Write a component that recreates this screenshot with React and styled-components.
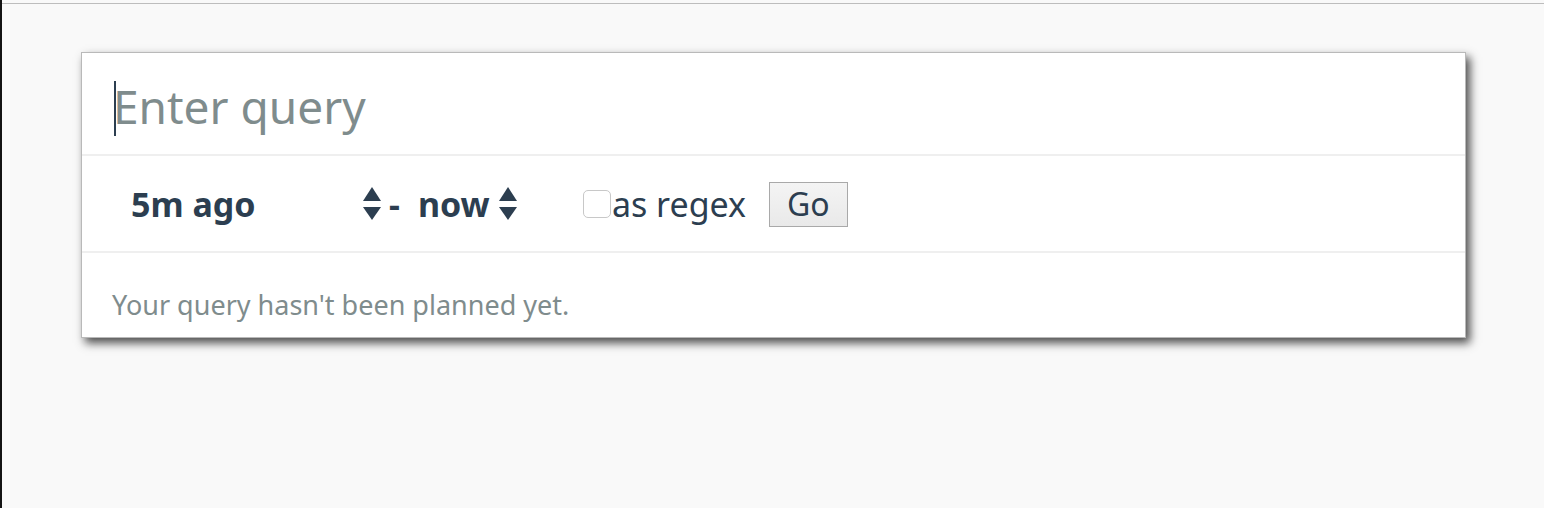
import React from 'react';
import styled, { createGlobalStyle } from 'styled-components';

const GlobalStyle = createGlobalStyle`
  html, body {
    margin: 0;
    padding: 0;
    background: #f9f9f9;
  }
  body {
    font-family: "Noto Sans", "Open Sans", sans-serif;
    color: #2c3e50;
  }
`;

const Page = styled.div`
  min-height: 100vh;
  box-sizing: border-box;
  border-left: 2px solid #141414;
  padding-top: 3px;
`;

const TopRule = styled.div`
  height: 1px;
  background: #bdbdbd;
`;

const Card = styled.div`
  margin: 48px 0 0 79px;
  width: 1385px;
  box-sizing: border-box;
  background: #fff;
  border: 1.5px solid #b9b9b9;
  box-shadow: 4px 5px 9px rgba(0, 0, 0, 0.7);
`;

const Section = styled.div`
  border-bottom: ${props => (props.last ? 'none' : '2px solid #efefef')};
`;

const QueryWrap = styled.div`
  position: relative;
  padding: 23px 31px 18px;

  &::before {
    content: '';
    position: absolute;
    left: 32px;
    top: 28px;
    width: 2px;
    height: 55px;
    background: #2c3e50;
  }
`;

const QueryInput = styled.input`
  display: block;
  width: 100%;
  box-sizing: border-box;
  border: none;
  outline: none;
  padding: 0;
  margin: 0;
  background: transparent;
  font-family: "Noto Sans", sans-serif;
  font-size: 46px;
  line-height: 60px;
  height: 60px;
  color: #2c3e50;

  &::placeholder {
    color: #7f8c8d;
  }
`;

const Controls = styled.div`
  display: flex;
  align-items: center;
  height: 46px;
  padding: 25px 0 24px 49px;
`;

const TimeField = styled.div`
  display: flex;
  align-items: center;
  justify-content: space-between;
  width: ${props => props.width}px;
  font-size: 34px;
  font-weight: 700;
  color: #2c3e50;
`;

const Dash = styled.span`
  font-size: 34px;
  font-weight: 700;
  margin: 0 18px 0 8px;
`;

const Check = styled.span`
  display: inline-block;
  width: 28px;
  height: 28px;
  box-sizing: border-box;
  border: 1.5px solid #c8c8c8;
  border-radius: 5px;
  background: #fff;
  margin-left: 66px;
  margin-right: 1px;
`;

const CheckLabel = styled.label`
  font-size: 34px;
  color: #2c3e50;
`;

const GoButton = styled.button`
  margin-left: 23px;
  height: 45px;
  padding: 0 17px;
  border: 1px solid #a9a9a9;
  background: linear-gradient(#f4f4f4, #e9e9e9);
  font-family: "Noto Sans", sans-serif;
  font-size: 32px;
  line-height: 1;
  color: #2c3e50;
`;

const Status = styled.div`
  padding: 33px 30px 14px;
  font-size: 27px;
  color: #7f8c8d;
`;

const Spinner = () => (
  <svg width="18" height="34" viewBox="0 0 18 34">
    <polygon points="9,0 18,14 0,14" fill="#2c3e50" />
    <polygon points="0,20 18,20 9,33" fill="#2c3e50" />
  </svg>
);

const App = () => (
  <>
    <GlobalStyle />
    <Page>
      <TopRule />
      <Card>
        <Section>
          <QueryWrap>
            <QueryInput placeholder="Enter query" />
          </QueryWrap>
        </Section>
        <Section>
          <Controls>
            <TimeField width={250}>
              <span>5m ago</span>
              <Spinner />
            </TimeField>
            <Dash>-</Dash>
            <TimeField width={99}>
              <span>now</span>
              <Spinner />
            </TimeField>
            <Check />
            <CheckLabel>as regex</CheckLabel>
            <GoButton>Go</GoButton>
          </Controls>
        </Section>
        <Section last>
          <Status>Your query hasn't been planned yet.</Status>
        </Section>
      </Card>
    </Page>
  </>
);

export default App;
